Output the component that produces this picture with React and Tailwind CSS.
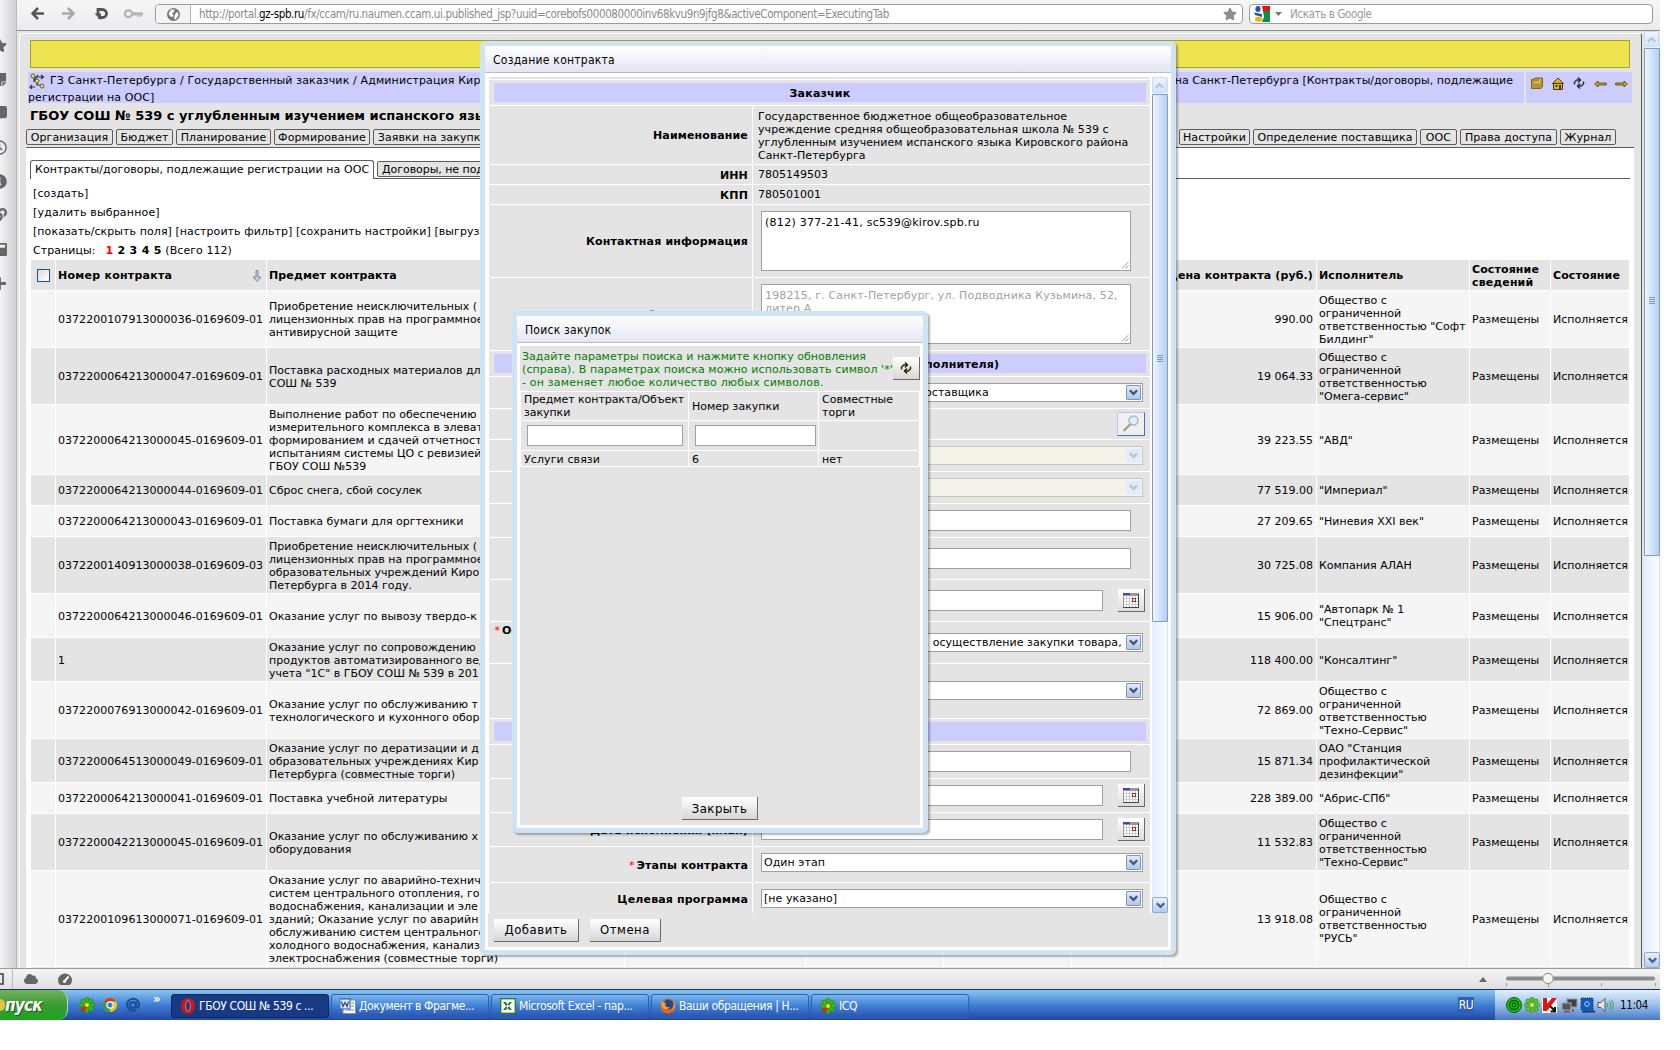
import React from 'react';
import { FaStar, FaStickyNote, FaRegClock, FaInfoCircle, FaPlus, FaCloud, FaCommentAlt, FaLink, FaWindowMaximize } from 'react-icons/fa';

const rows = [
  { h: 'h-[57px]', num: '0372200107913000036-0169609-01', subject: ['Приобретение неисключительных (', 'лицензионных прав на программное', 'антивирусной защите'], price: '990.00', firm: ['Общество с', 'ограниченной', 'ответственностью "Софт', 'Билдинг"'] },
  { h: 'h-[57px]', num: '0372200064213000047-0169609-01', subject: ['Поставка расходных материалов для', 'СОШ № 539'], price: '19 064.33', firm: ['Общество с', 'ограниченной', 'ответственностью', '"Омега-сервис"'] },
  { h: 'h-[70px]', num: '0372200064213000045-0169609-01', subject: ['Выполнение работ по обеспечению', 'измерительного комплекса в элеват', 'формированием и сдачей отчетност', 'испытаниям системы ЦО с ревизией', 'ГБОУ СОШ №539'], price: '39 223.55', firm: ['"АВД"'] },
  { h: 'h-[31px]', num: '0372200064213000044-0169609-01', subject: ['Сброс снега, сбой сосулек'], price: '77 519.00', firm: ['"Империал"'] },
  { h: 'h-[31px]', num: '0372200064213000043-0169609-01', subject: ['Поставка бумаги для оргтехники'], price: '27 209.65', firm: ['"Ниневия XXI век"'] },
  { h: 'h-[57px]', num: '0372200140913000038-0169609-03', subject: ['Приобретение неисключительных (', 'лицензионных прав на программное', 'образовательных учреждений Киро', 'Петербурга в 2014 году.'], price: '30 725.08', firm: ['Компания АЛАН'] },
  { h: 'h-[44px]', num: '0372200064213000046-0169609-01', subject: ['Оказание услуг по вывозу твердо-к'], price: '15 906.00', firm: ['"Автопарк № 1', '"Спецтранс"'] },
  { h: 'h-[44px]', num: '1', subject: ['Оказание услуг по сопровождению', 'продуктов автоматизированного вед', 'учета "1С" в ГБОУ СОШ № 539 в 201'], price: '118 400.00', firm: ['"Консалтинг"'] },
  { h: 'h-[57px]', num: '0372200076913000042-0169609-01', subject: ['Оказание услуг по обслуживанию т', 'технологического и кухонного обор'], price: '72 869.00', firm: ['Общество с', 'ограниченной', 'ответственностью', '"Техно-Сервис"'] },
  { h: 'h-[44px]', num: '0372200064513000049-0169609-01', subject: ['Оказание услуг по дератизации и д', 'образовательных учреждениях Кир', 'Петербурга (совместные торги)'], price: '15 871.34', firm: ['ОАО "Станция', 'профилактической', 'дезинфекции"'] },
  { h: 'h-[31px]', num: '0372200064213000041-0169609-01', subject: ['Поставка учебной литературы'], price: '228 389.00', firm: ['"Абрис-СПб"'] },
  { h: 'h-[57px]', num: '0372200042213000045-0169609-01', subject: ['Оказание услуг по обслуживанию х', 'оборудования'], price: '11 532.83', firm: ['Общество с', 'ограниченной', 'ответственностью', '"Техно-Сервис"'] },
  { h: 'h-[96px]', num: '0372200109613000071-0169609-01', subject: ['Оказание услуг по аварийно-технич', 'систем центрального отопления, гор', 'водоснабжения, канализации и эле', 'зданий; Оказание услуг по аварийн', 'обслуживанию систем центрального', 'холодного водоснабжения, канализ', 'электроснабжения (совместные торги)'], price: '13 918.08', firm: ['Общество с', 'ограниченной', 'ответственностью', '"РУСЬ"'] },
];

const Lines = ({ items }) => (
  <div className="whitespace-nowrap">
    {items.map((line, i) => <div key={i}>{line}</div>)}
  </div>
);

const TableRow = ({ height, tone, cells, bold }) => (
  <div className={`flex gap-px mb-px leading-[13px] ${height} ${bold ? 'font-bold tracking-[0.12px]' : ''}`}>
    <div className={`w-6 flex items-center justify-center ${tone}`}>{cells[0]}</div>
    <div className={`w-[210px] pl-[2px] pr-[3px] pt-px flex items-center justify-between whitespace-nowrap tracking-[0.04px] ${tone}`}>{cells[1]}</div>
    <div className={`w-[357px] pl-[2px] pt-px flex items-center ${tone}`}>{cells[2]}</div>
    <div className={`w-[180px] ${tone}`} />
    <div className={`w-[137px] ${tone}`} />
    <div className={`w-[127px] ${tone}`} />
    <div className={`w-[89px] ${tone}`} />
    <div className={`flex-1 pr-[3px] pt-px flex items-center justify-end whitespace-nowrap ${tone}`}>{cells[3]}</div>
    <div className={`w-[152px] pl-[2px] pt-px flex items-center ${tone}`}>{cells[4]}</div>
    <div className={`w-20 pl-[2px] pt-px flex items-center ${tone}`}>{cells[5]}</div>
    <div className={`w-[78px] pl-[2px] pt-px flex items-center ${tone}`}>{cells[6]}</div>
  </div>
);

const Chevron = ({ up, color = '#4d6185' }) => (
  <svg width="9" height="7" viewBox="0 0 9 7" className={up ? 'rotate-180' : ''}>
    <path d="M.8 1.2 4.5 4.9 8.2 1.2" fill="none" stroke={color} strokeWidth="2.3" />
  </svg>
);

const ScrollBar = ({ thumb, grip }) => (
  <div className="w-4 h-full flex flex-col bg-gradient-to-r from-[#e2eefd] to-[#fbfcff] border-r border-[#d5e2f8]">
    <div className="h-4 shrink-0 rounded-[2px] border border-[#c9dcf5] bg-gradient-to-b from-[#edf4fe] to-[#d5e5fa] flex items-center justify-center"><Chevron up color="#b3c5dd" /></div>
    <div className={`${thumb} mt-px -mr-px shrink-0 border border-[#7f9bc4] rounded-[1px] bg-gradient-to-r from-[#f0f7ff] via-[#d0e3fb] to-[#b5cfee] flex justify-center`}>
      <div className={`${grip} w-[6px] h-2 flex flex-col gap-px`}>
        {[0, 1, 2, 3].map((i) => <span key={i} className="h-px bg-[#7d98bf]" />)}
      </div>
    </div>
    <div className="mt-auto -mr-px h-4 shrink-0 rounded-[2px] border border-[#8fa9cc] bg-gradient-to-b from-[#e9f2fd] to-[#b6cdec] flex items-center justify-center"><Chevron /></div>
  </div>
);

const Tab = ({ w, children }) => (
  <div className={`${w} h-4 shrink-0 border border-[#5c5c5c] rounded-[2px] flex justify-center items-center leading-[13px] pt-px whitespace-nowrap overflow-hidden tracking-[0.1px]`}>{children}</div>
);

const Select = ({ children, disabled }) => (
  <div className={`w-[382px] h-[19px] border flex items-center p-px pl-[2px] ${disabled ? 'bg-[#f3f3e9] border-[#c9c7ba]' : 'bg-white border-[#a0a0a0]'}`}>
    <div className="flex-1 min-w-0 overflow-hidden whitespace-nowrap leading-[14px] tracking-[0.05px]">{children}</div>
    <div className={`w-[15px] h-[15px] flex items-center justify-center rounded-[1px] border ${disabled ? 'bg-[#dfeafa] border-[#e8effa]' : 'border-[#7c98bd] bg-gradient-to-b from-[#dfebfa] to-[#b0c8e8]'}`}>
      <Chevron color={disabled ? '#c3c3bd' : '#43557a'} />
    </div>
  </div>
);

const Input = ({ w = 'w-[370px]' }) => <div className={`${w} h-[21px] bg-white border border-[#a0a0a0]`} />;

const TextArea = ({ children, muted }) => (
  <div className={`relative w-[370px] h-[60px] bg-white border border-[#a0a0a0] pl-[3px] pt-1 leading-[13px] ${muted ? 'text-[#a2a2a2] tracking-[0.15px]' : 'tracking-[0.28px]'}`}>
    {children}
    <svg width="8" height="8" viewBox="0 0 8 8" className="absolute right-px bottom-px"><path d="M1 7.5 7.5 1M4.5 7.5l3-3" stroke="#999" fill="none" /></svg>
  </div>
);

const DateField = () => (
  <div className="flex items-center">
    <Input w="w-[342px]" />
    <div className="ml-[15px] w-[27px] h-[23px] bg-gradient-to-b from-white to-[#dcdcdc] border-r border-b border-[#6a6a6a] flex items-center justify-center">
      <svg width="16" height="15" viewBox="0 0 16 15" shapeRendering="crispEdges">
        <rect width="16" height="15" fill="#fff" />
        <path d="M3.5 3v12M6.5 3v12M9.5 3v12M12.5 3v12M0 5.5h16M0 8.5h16M0 11.5h16" stroke="#cfcfcf" />
        <rect width="16" height="3" fill="#9a9a9a" /><rect width="7" height="2" fill="#4444aa" />
        <path d="M.5 3v11.5" stroke="#999" /><path d="M0 14.500h16M15.500 1v14" stroke="#444" />
        <rect x="9.500" y="5.500" width="3" height="3" fill="#fff" stroke="#a03030" />
      </svg>
    </div>
  </div>
);

const Section = ({ children }) => (
  <div className="h-[25px] mb-px bg-[#e4e4e4] flex items-center pl-[5px] pr-1">
    <div className="flex-1 h-[19px] bg-[#ccccff] text-center font-bold leading-[21px] tracking-[0.19px]">{children}</div>
  </div>
);

const Field = ({ h, label, required, pad = 'pl-2', children }) => (
  <div className={`${h} flex gap-px mb-px shrink-0`}>
    <div className="w-[263px] shrink-0 bg-[#e4e4e4] flex items-center justify-end text-right font-bold pr-1 pt-px leading-[13px] whitespace-nowrap tracking-[0.16px]">
      <div>{required && <span className="text-[#ff0000] font-normal mr-[2px]">*</span>}{label}</div>
    </div>
    <div className={`flex-1 bg-[#e4e4e4] ${pad} flex items-center`}>{children}</div>
  </div>
);

const Button = ({ w, children }) => (
  <div className={`${w} h-[23px] flex items-center justify-center pt-px text-[13px] leading-4 tracking-[0.5px] bg-gradient-to-b from-white to-[#d6d6d6] border-r border-b border-[#6a6a6a] font-['DejaVu_Sans_Condensed','DejaVu_Sans',sans-serif]`}>{children}</div>
);

const DialogTitle = ({ children }) => (
  <div className="h-[27px] shrink-0 border-b border-[#b9bcc6] bg-gradient-to-b from-white to-[#e3e6f2] pl-2 pt-px flex items-center text-[12px] tracking-[0.25px] font-['DejaVu_Sans_Condensed','DejaVu_Sans',sans-serif]">{children}</div>
);

const RefreshIcon = ({ color = '#2e2708' }) => (
  <svg width="12" height="12" viewBox="0 0 12 12" fill="none" stroke={color} strokeWidth="1.5">
    <path d="M1.500 7.500V5.200L3.700 3H6.500M5 .5 7.500 3 5 5.500M10.500 4.500v2.300L8.300 9H5.500M7 6.500 4.500 9 7 11.500" />
  </svg>
);

const Flower = ({ size = 16, color = '#3fb51f', dot = '#f5e23a' }) => (
  <svg width={size} height={size} viewBox="0 0 16 16">
    {[0, 45, 90, 135, 180, 225, 270, 315].map((a) => (
      <ellipse key={a} cx="8" cy="3.300" rx="2.200" ry="3.200" fill={a === 225 && dot !== '#f5f08a' ? '#e02a1a' : color} stroke="#1d6b12" strokeWidth=".4" transform={`rotate(${a} 8 8)`} />
    ))}
    <circle cx="8" cy="8" r="2" fill={dot} />
  </svg>
);

const InnerDialog = () => (
  <div className="absolute left-[512px] top-[311px] w-[416px] h-[522px] border-[5px] border-[#d0e3f4] rounded-[5px] bg-white shadow-[2px_2px_2px_rgba(0,0,0,0.3)] flex flex-col">
    <DialogTitle>Поиск закупок</DialogTitle>
    <div className="mx-[3px] mt-[3px] mb-[3px] flex-1 bg-[#e4e4e4] flex flex-col items-center">
      <div className="relative w-full h-[45px] pl-[2px] pt-1 leading-[13px] text-[#008000] whitespace-nowrap">
        <div>Задайте параметры поиска и нажмите кнопку обновления</div>
        <div className="tracking-[0.09px]">(справа). В параметрах поиска можно использовать символ '*'</div>
        <div className="tracking-[0.18px]">- он заменяет любое количество любых символов.</div>
        <div className="absolute right-0 top-[11px] w-[27px] h-[23px] bg-gradient-to-b from-white to-[#d6d6d6] border-r border-b border-[#6a6a6a] flex items-center justify-center"><RefreshIcon /></div>
      </div>
      <div className="w-[400px] bg-white p-px flex flex-col gap-px leading-[13px]">
        <div className="flex gap-px h-7">
          <div className="w-[167px] pl-[3px] bg-[#e4e4e4] flex items-center tracking-[-0.07px]"><Lines items={['Предмет контракта/Объект', 'закупки']} /></div>
          <div className="w-[129px] pl-[3px] bg-[#e4e4e4] flex items-center">Номер закупки</div>
          <div className="flex-1 pl-[3px] bg-[#e4e4e4] flex items-center"><Lines items={['Совместные', 'торги']} /></div>
        </div>
        <div className="flex gap-px h-[29px]">
          <div className="w-[167px] pl-[6px] bg-[#e4e4e4] flex items-center"><Input w="w-[156px]" /></div>
          <div className="w-[129px] pl-[6px] bg-[#e4e4e4] flex items-center"><Input w="w-[121px]" /></div>
          <div className="flex-1 bg-[#e4e4e4]" />
        </div>
        <div className="flex gap-px h-[15px]">
          <div className="w-[167px] pl-[3px] pt-px bg-[#e4e4e4] flex items-center tracking-[0.1px]">Услуги связи</div>
          <div className="w-[129px] pl-[3px] pt-px bg-[#e4e4e4] flex items-center">6</div>
          <div className="flex-1 pl-[3px] pt-px bg-[#e4e4e4] flex items-center">нет</div>
        </div>
      </div>
      <div className="mt-auto mb-[5px]"><Button w="w-[76px]">Закрыть</Button></div>
    </div>
  </div>
);

const ContractDialog = () => (
  <div className="absolute left-[480px] top-[41px] w-[696px] h-[914px] border-[5px] border-[#d0e3f4] rounded-[5px] bg-white shadow-[2px_2px_2px_rgba(0,0,0,0.3)] flex flex-col">
    <DialogTitle>Создание контракта</DialogTitle>
    <div className="mt-1 ml-1 h-[836px] flex overflow-hidden">
      <div className="w-[661px]">
        <div className="h-[2px] mb-px bg-[#e4e4e4]" />
        <Section>Заказчик</Section>
        <Field h="h-[58px]" label="Наименование" pad="pl-[5px]">
          <div className="leading-[13px] pt-px tracking-[0.06px]">
            <Lines items={['Государственное бюджетное общеобразовательное', 'учреждение средняя общеобразовательная школа № 539 с', 'углубленным изучением испанского языка Кировского района', 'Санкт-Петербурга']} />
          </div>
        </Field>
        <Field h="h-[19px]" label="ИНН" pad="pl-[5px] pt-px">7805149503</Field>
        <Field h="h-[19px]" label="КПП" pad="pl-[5px] pt-px">780501001</Field>
        <Field h="h-[72px]" label="Контактная информация"><TextArea>(812) 377-21-41, sc539@kirov.spb.ru</TextArea></Field>
        <Field h="h-[72px]" label={<div className="pt-[2px]">Общие сведения</div>}><TextArea muted>198215, г. Санкт-Петербург, ул. Подводника Кузьмина, 52,<br />литер А</TextArea></Field>
        <Section>Определение поставщика (подрядчика, исполнителя)</Section>
        <Field h="h-[31px]"><Select>Закупка у единственного поставщика</Select></Field>
        <Field h="h-[30px]">
          <div className="ml-auto mr-[5px] w-7 h-6 bg-[#f0f0f0] border border-t-[#aecdf0] border-l-[#aecdf0] border-r-[#4a73b5] border-b-[#4a73b5] flex items-center justify-center">
            <svg width="18" height="18" viewBox="0 0 18 18"><path d="m1.500 16 7.500-7.500" stroke="#9a9a9a" strokeWidth="2.200" /><circle cx="11.500" cy="5.500" r="4.500" fill="#d8eefa" stroke="#b0b4b8" strokeWidth="1.500" /></svg>
          </div>
        </Field>
        <Field h="h-[31px]"><Select disabled /></Field>
        <Field h="h-[31px]"><Select disabled /></Field>
        <Field h="h-[33px]"><Input /></Field>
        <Field h="h-[41px]"><Input /></Field>
        <Field h="h-[41px]"><DateField /></Field>
        <Field h="h-[41px]" required label={<>Основание для заключения договора<br />с единственным поставщиком<br />(подрядчиком)</>}><Select>п.4 ч.1 ст.93 - на сумму 100, осуществление закупки товара,</Select></Field>
        <Field h="h-[54px]"><div className="mb-px"><Select /></div></Field>
        <Section />
        <Field h="h-[33px]"><Input /></Field>
        <Field h="h-[33px]"><DateField /></Field>
        <Field h="h-[33px]" label="Дата исполнения (план)"><DateField /></Field>
        <Field h="h-[35px]" required label="Этапы контракта"><div className="mb-1"><Select>Один этап</Select></div></Field>
        <Field h="h-[31px]" label="Целевая программа"><Select>[не указано]</Select></Field>
      </div>
      <div className="ml-[2px] h-full"><ScrollBar thumb="h-[528px]" grip="mt-[260px]" /></div>
    </div>
    <div className="mx-[3px] h-[34px] bg-[#e4e4e4] pl-[6px] flex items-center gap-[11px]">
      <Button w="w-[85px]">Добавить</Button>
      <Button w="w-[71px]">Отмена</Button>
    </div>
  </div>
);

const Toolbar = () => (
  <div className="h-[31px] shrink-0 border-b border-[#8d8d8d] bg-gradient-to-b from-[#f6f6f7] to-[#ebebed] flex items-start pt-1 pl-[14px] text-[11.5px] tracking-[-0.38px] font-['DejaVu_Sans_Condensed','DejaVu_Sans',sans-serif]">
    <svg width="118" height="20" viewBox="0 0 118 20" fill="none">
      <path d="M13 9.500H2M7 4 1.500 9.500 7 15" stroke="#555" strokeWidth="2.600" />
      <path d="M31 9.500h11M37 4l5.500 5.500L37 15" stroke="#a8a8a8" strokeWidth="2.600" />
      <path d="M67 11V5.500h4.500a3.800 3.800 0 1 1 0 8H67" stroke="#555" strokeWidth="2.800" />
      <path d="M63.500 9.500h6.500v6.500z" fill="#555" />
      <path d="M101 8.300h11v3.200h-1.500v1.500h-1.500v-1.500h-1.500v1.500h-1.500v-1.500h-5z" fill="#b5b5b5" />
      <ellipse cx="97.500" cy="9.800" rx="3.600" ry="3.400" stroke="#b5b5b5" strokeWidth="2.200" />
    </svg>
    <div className="ml-[6px] w-[1088px] h-5 border border-[#9b9b9b] rounded-[4px] bg-white flex items-center overflow-hidden">
      <div className="w-[35px] h-full border-r border-[#b5b5b5] bg-[#f3f3f3] flex items-center justify-center">
        <svg width="15" height="15" viewBox="0 0 15 15"><circle cx="7.500" cy="7.500" r="6.500" fill="#777" /><path d="M5 2.500h3.500L8 5 6 6.500 7.500 8l-1 2-2-.5L2.500 7zM10.500 5l2 1.500-.5 3-2.500 3-1.500-1 .5-3z" fill="#fff" /></svg>
      </div>
      <div className="ml-[8px] pt-px text-[#8a8a8a] whitespace-nowrap">http://portal.<span className="text-black">gz-spb.ru</span>/fx/ccam/ru.naumen.ccam.ui.published_jsp?uuid=corebofs000080000inv68kvu9n9jfg8&amp;activeComponent=ExecutingTab</div>
      <FaStar className="ml-auto mr-[5px]" size={14} color="#8f8f8f" />
    </div>
    <div className="ml-[6px] w-[404px] h-5 border border-[#9b9b9b] rounded-[4px] bg-white flex items-center">
      <svg className="ml-1" width="16" height="16" viewBox="0 0 16 16"><rect width="16" height="16" fill="#fff" /><path d="M8 0h8v6H9z" fill="#e11" /><path d="M9 5h7v11H8l2-5z" fill="#0a8f3c" /><ellipse cx="4" cy="3" rx="2.600" ry="3" fill="#1d55c4" /><path d="M0 6.500 8 8v3L1 9z" fill="#1d55c4" /><ellipse cx="4.500" cy="13.300" rx="3.500" ry="2.500" fill="#f5b400" /></svg>
      <svg className="ml-[5px]" width="7" height="4"><path d="M0 0h7L3.500 4z" fill="#777" /></svg>
      <span className="ml-[8px] pt-px text-[#999]">Искать в Google</span>
    </div>
  </div>
);

const Sidebar = () => (
  <div className="w-[17px] shrink-0 border-r border-[#b9b9b9] bg-gradient-to-r from-[#f3f3f4] to-[#cfcfd1] overflow-hidden text-[#666] flex flex-col pt-[38px] gap-[19px]">
    {[FaStar, FaStickyNote, FaCommentAlt, FaRegClock, FaInfoCircle, FaLink, FaWindowMaximize, FaPlus].map((Icon, i) => (
      <Icon key={i} size={15} className="shrink-0 -ml-[8px]" />
    ))}
  </div>
);

const Page = () => (
  <div className="flex-1 min-w-0 flex overflow-hidden">
    <div className="flex-1 min-w-0 bg-[#e4e4e4] pl-[2px] pt-[2px] overflow-hidden">
      <div className="border-l border-t border-l-white border-t-white border-r border-r-[#5a5a5a] mr-[2px] h-full rounded-t-[3px] pt-[6px] pl-[6px] pr-[7px]">
        <div className="ml-1 mr-[4px] h-7 bg-[#eee350] border border-[#a8a020]" />
        <div className="mt-1 ml-[2px] mr-[2px] h-[31px] flex gap-[2px] leading-[17px]">
          <div className="flex-1 min-w-0 bg-[#ccccff]">
            <div className="flex justify-between whitespace-nowrap pr-[11px]">
              <div className="flex items-center tracking-[0.13px]">
                <svg width="16" height="16" viewBox="0 0 16 16" className="ml-px mr-[5px]">
                  <path d="M5 4h9M12 2l2.500 2L12 6M8 7v5h5M5 5v4M1 14h5M3 12l-2 2 2 2M9 2 5 8" fill="none" stroke="#333" strokeWidth="1.200" />
                  <circle cx="4" cy="3" r="2" fill="#f3e64a" stroke="#444" strokeWidth=".8" /><circle cx="8" cy="8" r="2" fill="#f3e64a" stroke="#444" strokeWidth=".8" /><circle cx="13" cy="13" r="2" fill="#f3e64a" stroke="#444" strokeWidth=".8" />
                </svg>
                ГЗ Санкт-Петербурга / Государственный заказчик / Администрация Кировского
              </div>
              <div>с углубленным изучением испанского языка Кировского района Санкт-Петербурга [Контракты/договоры, подлежащие</div>
            </div>
            <div className="mt-px leading-[15px] tracking-[0.08px]">регистрации на ООС]</div>
          </div>
          <div className="w-[106px] bg-[#ccccff] flex items-start pt-[5px] pl-[5px] gap-[9px]">
            <svg width="12" height="12" viewBox="0 0 12 12"><path d="M.5 2.500 3 2l1-1h7.500v8.500l-1.500 2H.5z" fill="#b8942a" stroke="#7a661a" /><path d="M2.500 5.500h6V3l1.500-1" stroke="#e6d27a" fill="none" /></svg>
            <svg width="12" height="13" viewBox="0 0 12 13"><path d="M.5 6.500 6 1l5.500 5.500zM1.500 6.500h9v6h-9z" fill="#d8b52c" stroke="#4a3c08" /><path d="M3.500 8h2v2h-2zM7 8h2v4H7z" fill="#4a3c08" /></svg>
            <RefreshIcon color="#333" />
            <svg width="13" height="13" viewBox="0 0 13 13"><path d="M.7 7 4 4v2h8.300v2H4v2z" fill="#d0a820" stroke="#5a4a0c" strokeWidth=".9" /></svg>
            <svg width="13" height="13" viewBox="0 0 13 13" className="-ml-px"><path d="M12.300 7 9 4v2H.7v2H9v2z" fill="#d0a820" stroke="#5a4a0c" strokeWidth=".9" /></svg>
          </div>
        </div>
        <div className="ml-1 h-[26px] flex items-center font-bold text-[13px] whitespace-nowrap">ГБОУ СОШ № 539 с углубленным изучением испанского языка Кировского</div>
        <div className="flex gap-[3px] pb-[2px] border-b border-[#5c5c5c]">
          <Tab w="w-[87px]">Организация</Tab>
          <Tab w="w-[57px]">Бюджет</Tab>
          <Tab w="w-[95px]">Планирование</Tab>
          <Tab w="w-[96px]">Формирование</Tab>
          <Tab w="w-[119px]">Заявки на закупку</Tab>
          <div className="ml-auto flex gap-[3px] mr-[18px]">
            <Tab w="w-[71px]">Настройки</Tab>
            <Tab w="w-[164px]">Определение поставщика</Tab>
            <Tab w="w-[37px]">ООС</Tab>
            <Tab w="w-[97px]">Права доступа</Tab>
            <Tab w="w-[56px]">Журнал</Tab>
          </div>
        </div>
        <div className="bg-white h-[900px] pt-3">
          <div className="ml-1 mr-1 flex items-start h-[19px] leading-[13px]">
            <div className="w-[344px] h-[19px] border border-b-0 border-[#5c5c5c] rounded-t-[3px] pl-1 pt-[2px] whitespace-nowrap tracking-[0.08px]">Контракты/договоры, подлежащие регистрации на ООС</div>
            <div className="flex-1 h-[19px] border-b border-[#5c5c5c] pl-[3px] pt-px">
              <div className="w-[300px] h-4 bg-[#e4e4e4] border border-[#5c5c5c] rounded-[2px] pl-1 pt-px whitespace-nowrap overflow-hidden tracking-[-0.05px]">Договоры, не подлежащие регистрации</div>
            </div>
          </div>
          <div className="pl-[7px] pt-[5px] leading-[19px] whitespace-nowrap">
            <div className="tracking-[0.12px]">[создать]</div>
            <div className="tracking-[0.17px]">[удалить выбранное]</div>
            <div className="tracking-[0.07px]">[показать/скрыть поля] [настроить фильтр] [сохранить настройки] [выгрузить]</div>
            <div className="flex tracking-[0.06px]">Страницы:
              <span className="ml-[10px] mr-[4px] font-bold flex gap-[4.3px]"><span className="text-[#ff0000]">1</span><span>2</span><span>3</span><span>4</span><span>5</span></span>
              (Всего 112)
            </div>
          </div>
          <div className="pl-[5px] pr-[5px]">
            <TableRow height="h-[30px]" tone="bg-[#e4e4e4]" bold cells={[
              <span className="w-[13px] h-[13px] border border-[#1d5285] bg-gradient-to-br from-[#dcdcd7] to-white" />,
              <><span className="tracking-[0.25px]">Номер контракта</span><svg width="10" height="12" viewBox="0 0 10 12" className="mr-px"><path d="M4 .5h2v6.500h3L5 11.500 1 7h3z" fill="#c4c8ee" stroke="#777" strokeWidth=".8" /></svg></>,
              'Предмет контракта', 'Цена контракта (руб.)', 'Исполнитель', <Lines items={['Состояние', 'сведений']} />, 'Состояние',
            ]} />
            {rows.map((row, i) => (
              <div key={i} className={`${row.h} flex flex-col`}>
                <TableRow height="flex-1" tone={i % 2 ? 'bg-[#e4e4e4]' : 'bg-[#f5f5f5]'} cells={['', row.num, <Lines items={row.subject} />, row.price, <Lines items={row.firm} />, 'Размещены', 'Исполняется']} />
              </div>
            ))}
            <TableRow height="h-[10px]" tone="bg-[#e4e4e4]" cells={[]} />
          </div>
        </div>
      </div>
    </div>
    <ScrollBar thumb="h-[508px]" grip="mt-[248px]" />
  </div>
);

const StatusBar = () => (
  <div className="h-[22px] shrink-0 border-t border-t-[#9b9b9b] border-b border-b-[#17336f] bg-gradient-to-b from-[#f4f4f5] to-[#dfdfe1] flex items-center text-[#666]">
    <div className="w-[13px] h-full border-r border-[#bbb] flex items-center"><span className="w-1 h-3 border-2 border-l-0 border-[#666]" /></div>
    <FaCloud size={14} className="ml-[11px]" />
    <svg width="14" height="12" viewBox="0 0 14 12" className="ml-5"><path d="M2 12a7 6.800 0 1 1 10 0z" fill="#666" /><path d="M6 9 10.500 3.500" stroke="#fff" strokeWidth="2" /><circle cx="6.500" cy="8.500" r="1.500" fill="#fff" /></svg>
    <svg width="8" height="5" className="ml-auto"><path d="M0 5h8L4 0z" fill="#666" /></svg>
    <svg width="150" height="18" viewBox="0 0 150 18" className="ml-[19px] mr-[4px]">
      <rect x="0" y="6.500" width="149" height="4" rx="2" fill="#8b8b8b" />
      <path d="M.5 13v3M42.500 14v3M95.500 13v3M149.500 13v3" stroke="#999" />
      <circle cx="42" cy="8.500" r="5.200" fill="#f5f5f5" stroke="#888" />
    </svg>
  </div>
);

const TaskButton = ({ icon, active, children }) => (
  <div className={`w-[158px] h-6 shrink-0 rounded-[3px] border pl-[8px] flex items-center whitespace-nowrap ${active ? 'bg-[#173a85] border-[#0e2760]' : 'bg-gradient-to-b from-[#7ab6ec] via-[#3f80d5] to-[#2a54b0] border-[#2f60b8]'}`}>
    <span className="w-4 mr-[3px] flex justify-center">{icon}</span>{children}
  </div>
);

const icons = {
  opera: <svg width="14" height="16" viewBox="0 0 14 16"><ellipse cx="7" cy="8" rx="7" ry="8" fill="#c8191c" /><ellipse cx="7" cy="8" rx="2.300" ry="5.500" fill="#173a85" stroke="#f29a94" strokeWidth=".8" /></svg>,
  word: <svg width="16" height="16" viewBox="0 0 16 16"><path d="M6 2h9.500v13.500H3V11" fill="#fff" stroke="#7a8fc0" /><rect width="10" height="10" y="1" fill="#e8eefc" stroke="#2a4b9b" /><path d="m1.500 3.500 1.500 5 2-4 2 4 1.500-5" fill="none" stroke="#2a4b9b" strokeWidth="1.300" /><path d="M11 5h3M11 8h3M6 12h8" stroke="#6b80b5" /></svg>,
  excel: <svg width="16" height="16" viewBox="0 0 16 16"><rect x=".7" y=".7" width="14.600" height="14.600" fill="#fff" stroke="#2e7d32" strokeWidth="1.400" /><path d="M3 4h3l6 8H9zM12 4H9.500L3 12h3z" fill="#2e7d32" /></svg>,
  firefox: <svg width="16" height="16" viewBox="0 0 16 16"><circle cx="8" cy="8" r="7.500" fill="#e8651a" /><circle cx="8.500" cy="6.500" r="5" fill="#1d4a94" /><path d="M1 4c2 0 3 1 5 1L5 7c1 2 3 3 5 2-1 2-4 3-6 1.500C2 9 1 7 1 4zM13 3c2 2 2 5 1.500 7L12 12c2-3 2-6 1-9z" fill="#f5a623" /></svg>,
};

const Taskbar = () => (
  <div className="h-[30px] shrink-0 bg-gradient-to-b from-[#8cc5f0] via-[#3f7fd3] to-[#2148a4] flex items-center text-white text-[12px] tracking-[-0.38px] font-['DejaVu_Sans_Condensed','DejaVu_Sans',sans-serif]">
    <div className="w-[68px] h-full shrink-0 rounded-r-[10px] bg-gradient-to-b from-[#6fb35e] via-[#3a9a33] to-[#18a51b] border-r border-[#b5d8b0] flex items-center text-[17px] leading-none font-bold italic overflow-hidden">
      <span className="w-[5px] h-3 shrink-0 rounded-r-full bg-[#e3c23c]" />
      <span className="tracking-[-0.8px] [text-shadow:1px_1px_1px_#1c5a18]">пуск</span>
    </div>
    <div className="w-[103px] shrink-0 pl-[11px] flex items-center gap-[7px]">
      <Flower />
      <svg width="16" height="16" viewBox="0 0 16 16"><circle cx="8" cy="8" r="7" fill="#f3c613" /><path d="M8 8 1.900 4.500A7 7 0 0 1 14.100 4.500H8z" fill="#dc3a2b" /><path d="M8 8 8 15A7 7 0 0 1 1.900 4.500z" fill="#2f9e41" /><circle cx="8" cy="8" r="3.200" fill="#3b7de0" stroke="#fff" strokeWidth="1.200" /></svg>
      <svg width="16" height="16" viewBox="0 0 16 16" fill="none" stroke="#174d96" strokeWidth="2"><circle cx="8" cy="8" r="3" /><path d="M11 5v4.500c0 2 3 1.500 3-1.500a6 6 0 1 0-3 5" /></svg>
      <span className="ml-[5px] -mt-3 font-bold text-[13px]">»</span>
    </div>
    <div className="flex gap-[2px] mt-[2px]">
      <TaskButton active icon={icons.opera}>ГБОУ СОШ № 539 с ...</TaskButton>
      <TaskButton icon={icons.word}>Документ в Фрагме...</TaskButton>
      <TaskButton icon={icons.excel}>Microsoft Excel - пар...</TaskButton>
      <TaskButton icon={icons.firefox}>Ваши обращения | Н...</TaskButton>
      <TaskButton icon={<Flower />}>ICQ</TaskButton>
    </div>
    <div className="ml-auto mr-[21px] w-4 h-4 shrink-0 bg-[#2f5fbb] flex items-center justify-center">RU</div>
    <div className="w-[165px] h-full shrink-0 bg-gradient-to-b from-[#e3effb] via-[#9cc0ea] to-[#4a78c6] pl-[11px] flex items-center gap-[2px] text-black">
      <svg width="16" height="16" viewBox="0 0 16 16"><circle cx="8" cy="8" r="7.500" fill="#12c412" stroke="#075c07" /><circle cx="8" cy="8" r="4.500" fill="none" stroke="#064d06" strokeWidth="1.300" /><circle cx="8" cy="8" r="1.800" fill="none" stroke="#064d06" strokeWidth="1.200" /></svg>
      <Flower color="#5cc236" dot="#f5f08a" />
      <svg width="15" height="15" viewBox="0 0 15 15"><rect width="15" height="15" fill="#fff" /><path d="M1 0h4v6l5-6h5L5 13H1z" fill="#e31414" /><path d="m8 8 5 5M13 9v4.500H8.500" stroke="#111" strokeWidth="2" fill="none" /></svg>
      <svg width="17" height="15" viewBox="0 0 17 15" className="ml-[2px]"><rect x="6" y="1" width="10" height="8" fill="#444" stroke="#999" /><rect x="1" y="5" width="9" height="7" fill="#555" stroke="#aaa" /><path d="M3 13.500h6M12 11v3" stroke="#666" strokeWidth="2" /></svg>
      <svg width="15" height="16" viewBox="0 0 15 16"><rect x="1" y="1" width="12" height="12" fill="#1a58b8" stroke="#0c3a80" strokeDasharray="1 1" /><circle cx="7" cy="7" r="2.300" fill="none" stroke="#9cd0ff" /><path d="M2 14.500h13" stroke="#0c3a80" strokeWidth="2" /></svg>
      <svg width="17" height="16" viewBox="0 0 17 16" fill="none"><path d="M1 5.500h3L8 1.500v13L4 10.500H1z" fill="#e6e6e6" stroke="#555" /><path d="M10 6q2 2 0 4M12 4q3.500 4 0 8M14 2.500q4.500 5.500 0 11" stroke="#3c9a2c" /></svg>
      <span className="ml-[4px] pt-px text-[11.5px]">11:04</span>
    </div>
  </div>
);

export default function App() {
  return (
    <div className="relative w-[1680px] h-[1050px] bg-white overflow-hidden text-[11px] text-black font-['DejaVu_Sans',Verdana,sans-serif]">
      <div className="w-[1660px] h-[1020px] flex flex-col">
        <div className="flex-1 min-h-0 flex">
          <Sidebar />
          <div className="flex-1 min-w-0 flex flex-col">
            <Toolbar />
            <div className="flex-1 min-h-0 flex"><Page /></div>
          </div>
        </div>
        <StatusBar />
        <Taskbar />
      </div>
      <ContractDialog />
      <InnerDialog />
    </div>
  );
}
